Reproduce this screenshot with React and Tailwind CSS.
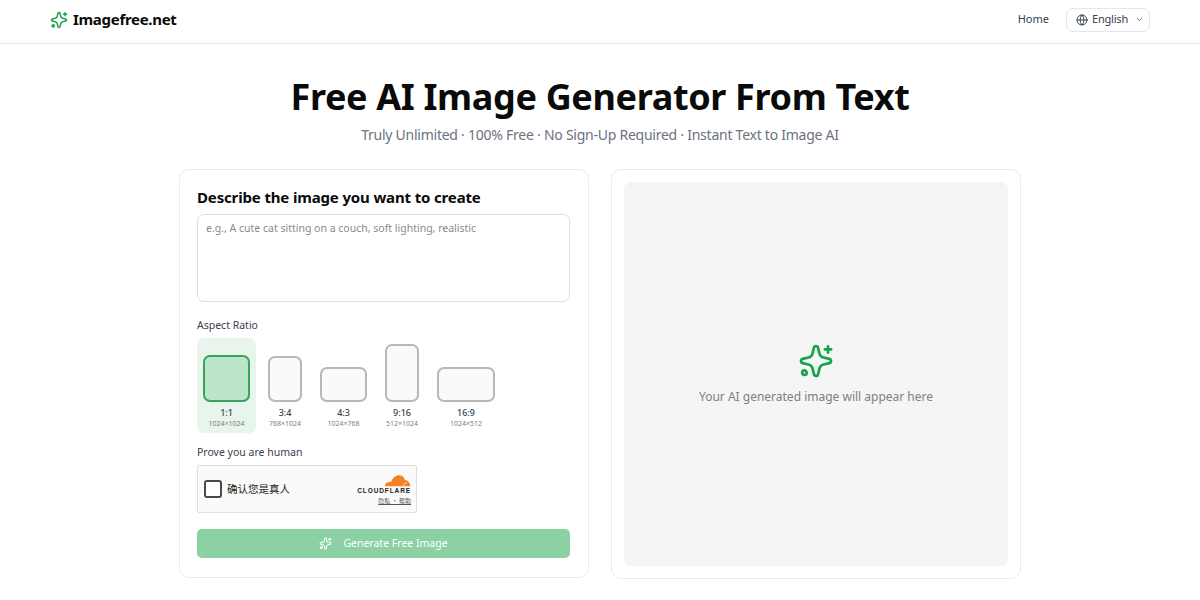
import React from "react";
import { Globe, ChevronDown } from "lucide-react";

// sparkle with a plus and a small ring, used in the logo, button and preview
const Spark = ({ className, strokeWidth = 2 }) => (
  <svg viewBox="0 0 24 24" fill="none" stroke="currentColor" strokeWidth={strokeWidth} strokeLinecap="round" strokeLinejoin="round" className={className}>
    <path d="M10.600 3.200C11 1.600 13 1.600 13.400 3.200L14.300 7c.3 1.300 1.400 2.400 2.700 2.700l3.800.9c1.600.4 1.600 2.400 0 2.800L17 14.300c-1.300.3-2.400 1.400-2.700 2.700l-.9 3.800c-.4 1.600-2.400 1.600-2.800 0L9.700 17c-.3-1.300-1.400-2.400-2.700-2.700l-3.800-.9c-1.600-.4-1.600-2.400 0-2.800L7 9.700C8.300 9.400 9.400 8.300 9.700 7z" />
    <path d="M20 2.200v4.200M17.900 4.300h4.200" />
    <circle cx="4.300" cy="19.800" r="1.500" />
  </svg>
);

const ratios = [
  { label: "1:1", size: "1024×1024", box: "w-[47px] h-[47px]", active: true, cell: "w-[59px]" },
  { label: "3:4", size: "768×1024", box: "w-[34px] h-[46px]", cell: "w-[46px]" },
  { label: "4:3", size: "1024×768", box: "w-[47px] h-[35px]", cell: "w-[59px]" },
  { label: "9:16", size: "512×1024", box: "w-[34px] h-[58px]", cell: "w-[46px]" },
  { label: "16:9", size: "1024×512", box: "w-[58px] h-[35px]", cell: "w-[70px]" },
];

const Header = () => (
  <header className="h-[44px] border-b border-[#e5e7eb] flex items-center justify-between px-[50px]">
    <div className="flex items-center gap-[5px] pb-[4px]">
      <Spark className="w-[18px] h-[18px] text-[#16a34a]" />
      <span className="text-[15px] tracking-[-0.3px] font-bold text-[#0a0a0a]">Imagefree.net</span>
    </div>
    <div className="flex items-center gap-[17px] pb-[4px]">
      <span className="text-[11px] text-[#374151]">Home</span>
      <div className="h-[24px] w-[84px] border border-[#e5e7eb] rounded-[7px] flex items-center pl-[9px] gap-[4px] text-[11px] tracking-[-0.2px] text-[#374151]">
        <Globe className="w-[12px] h-[12px]" />
        <span>English</span>
        <ChevronDown className="w-[9px] h-[9px] ml-[3px]" />
      </div>
    </div>
  </header>
);

export default function App() {
  return (
    <div className="min-h-screen bg-white font-['Noto_Sans',sans-serif]">
      <Header />

      <div className="pt-[27px] text-center">
        <h1 className="text-[36px] tracking-[-0.35px] leading-[52px] font-bold text-[#0a0a0a]">Free AI Image Generator From Text</h1>
        <p className="text-[14px] tracking-[-0.25px] leading-[24px] text-[#6b7280]">Truly Unlimited · 100% Free · No Sign-Up Required · Instant Text to Image AI</p>
      </div>

      <main className="mt-[22px] w-[842px] mx-auto flex gap-[22px]">
        <section className="w-[410px] h-[409px] border border-[#e9ebee] rounded-[10px] pl-[17px] pr-[18px] pt-[15px]">
          <h2 className="text-[15px] tracking-[-0.15px] leading-[24px] font-bold text-[#0a0a0a]">Describe the image you want to create</h2>
          <div className="mt-[5px] h-[88px] border border-[#dcdfe3] rounded-[7px] px-[8px] py-[5px] text-[10.500px] leading-[16px] text-[#858b93]">
            e.g., A cute cat sitting on a couch, soft lighting, realistic
          </div>

          <div className="mt-[15px] text-[10.500px] leading-[16px] text-[#374151]">Aspect Ratio</div>
          <div className="mt-[5px] flex gap-[6px] h-[95px]">
            {ratios.map((r) => (
              <div key={r.label} className={`${r.cell} flex flex-col items-center justify-end rounded-[7px] pb-[4px] ${r.active ? "bg-[#e8f5ed]" : ""}`}>
                <div className={`${r.box} rounded-[7px] border-2 ${r.active ? "bg-[#bde5c9] border-[#35a45c]" : "bg-[#fafafa] border-[#b8b8b8]"}`} />
                <div className="mt-[5px] text-[9px] leading-[11px] font-medium text-[#374151]">{r.label}</div>
                <div className="text-[7px] leading-[11px] text-[#7b8087]">{r.size}</div>
              </div>
            ))}
          </div>

          <div className="mt-[11px] text-[10.500px] leading-[16px] text-[#374151]">Prove you are human</div>
          <div className="mt-[5px] w-[220px] h-[48px] bg-[#fafafa] border border-[#e0e0e0] rounded-[2px] flex items-center pl-[6px] relative">
            <div className="w-[18px] h-[18px] border-2 border-[#4a4a4a] rounded-[3px] bg-white" />
            <span className="ml-[5px] text-[10.500px] text-[#232323] font-['Noto_Sans_CJK_SC',sans-serif]">确认您是真人</span>
            <div className="absolute right-[5px] top-[8px] w-[56px] flex flex-col items-end">
              <svg viewBox="0 0 28 13" className="w-[27px] h-[13px]">
                <path d="M1 12.500c-.3-2.500 1.500-4.500 4-4.300 1-.5 1.500-.5 2.500-.3C9 3.500 12 1 15.500 1c3.200 0 5.500 2 6.300 5 .6 0 .8 0 1.200.2C25.500 6.700 27 9.500 27.500 12.500z" fill="#f58220" />
                <path d="M20 12.500c.6-2 2-3.500 4-3.800" stroke="#fff" strokeWidth=".7" fill="none" />
              </svg>
              <div className="text-[6.500px] leading-[8px] font-bold tracking-[0.9px] text-[#222] font-['Liberation_Sans',sans-serif] whitespace-nowrap">CLOUDFLARE</div>
              <div className="mt-[2px] text-[6px] leading-[8px] text-[#555] underline font-['Noto_Sans_CJK_SC',sans-serif] whitespace-nowrap">隐私 · 帮助</div>
            </div>
          </div>

          <button className="mt-[16px] w-full h-[29px] rounded-[5px] bg-[#8bd1a4] text-white text-[10.500px] flex items-center justify-center gap-[11px]">
            <Spark className="w-[13px] h-[13px]" />
            Generate Free Image
          </button>
        </section>

        <section className="w-[410px] h-[410px] border border-[#e9ebee] rounded-[10px] p-[12px]">
          <div className="h-full bg-[#f5f5f5] rounded-[7px] flex flex-col items-center justify-center">
            <Spark className="w-[36px] h-[36px] text-[#16a34a]" strokeWidth={1.800} />
            <p className="mt-[9px] text-[12px] leading-[18px] text-[#7b7f86]">Your AI generated image will appear here</p>
          </div>
        </section>
      </main>
    </div>
  );
}
